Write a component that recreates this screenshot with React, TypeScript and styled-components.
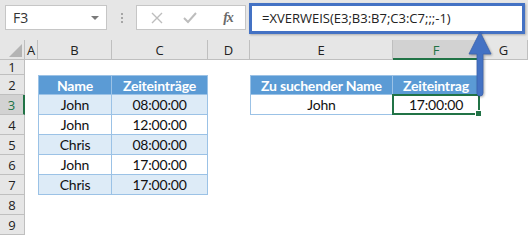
import React from "react";
import styled, { createGlobalStyle } from "styled-components";

const GlobalStyle = createGlobalStyle`
  html, body {
    margin: 0;
    padding: 0;
    background: #ffffff;
  }
  body {
    width: 528px;
    height: 240px;
    overflow: hidden;
    font-family: "Open Sans", "Liberation Sans", sans-serif;
  }
`;

const GREEN = "#217346";
const BLUE = "#4472c4";

const Page = styled.div`
  position: relative;
  width: 528px;
  height: 240px;
  overflow: hidden;
  background: #ffffff;
`;

const FormulaBar = styled.div`
  display: flex;
  align-items: flex-start;
  height: 40px;
  background: #e6e6e6;
  box-sizing: border-box;
  padding: 5px 0 0 5px;
`;

const NameBox = styled.div`
  position: relative;
  width: 102px;
  height: 25px;
  box-sizing: border-box;
  background: #fff;
  border: 1px solid #c6c6c6;
  font-size: 14px;
  line-height: 23px;
  padding-left: 7px;
  color: #333;
`;

const DropArrow = styled.span`
  position: absolute;
  right: 7px;
  top: 10px;
  width: 0;
  height: 0;
  border-left: 4px solid transparent;
  border-right: 4px solid transparent;
  border-top: 4px solid #7a7a7a;
`;

const Dots = styled.div`
  display: flex;
  flex-direction: column;
  gap: 2px;
  margin: 8px 13px 0 14px;
  > span {
    width: 2px;
    height: 2px;
    background: #a6a6a6;
  }
`;

const ButtonBox = styled.div`
  display: flex;
  align-items: center;
  width: 110px;
  height: 25px;
  box-sizing: border-box;
  background: #fff;
  border: 1px solid #c6c6c6;
  padding-left: 13px;
`;

const IconSlot = styled.span<{ $w: number }>`
  display: flex;
  align-items: center;
  justify-content: center;
  width: ${(p) => p.$w}px;
`;

const Fx = styled.span`
  font-family: "Liberation Serif", "DejaVu Serif", serif;
  font-style: italic;
  font-weight: bold;
  font-size: 14px;
  color: #6a6a6a;
  letter-spacing: -1px;
`;

const FormulaInput = styled.div`
  margin-left: 3px;
  margin-top: -2px;
  width: 276px;
  height: 31px;
  box-sizing: border-box;
  background: #fff;
  border: 3px solid ${BLUE};
  box-shadow: 1px 1px 2px rgba(0, 0, 0, 0.25);
  font-size: 13px;
  line-height: 25px;
  padding-left: 10px;
  color: #222;
  white-space: nowrap;
`;

const Sheet = styled.div`
  display: grid;
  grid-template-columns: 25px 13px 74px 96px 42px 143px 87px 1fr;
  grid-template-rows: 20px 15px repeat(8, 20px);
`;

const ColHead = styled.div<{ $active?: boolean }>`
  position: relative;
  box-sizing: border-box;
  background: ${(p) => (p.$active ? "#d2d2d2" : "#e6e6e6")};
  border-right: 1px solid #bfbfbf;
  border-bottom: ${(p) => (p.$active ? `2px solid ${GREEN}` : "1px solid #bfbfbf")};
  color: ${(p) => (p.$active ? GREEN : "#222")};
  font-size: 13px;
  line-height: 20px;
  text-align: center;
`;

const Corner = styled(ColHead)`
  &::after {
    content: "";
    position: absolute;
    right: 2px;
    bottom: 2px;
    width: 0;
    height: 0;
    border-left: 13px solid transparent;
    border-bottom: 13px solid #b4b4b4;
  }
`;

const RowHead = styled.div<{ $active?: boolean }>`
  grid-column: 1;
  box-sizing: border-box;
  display: flex;
  align-items: center;
  justify-content: center;
  background: ${(p) => (p.$active ? "#d2d2d2" : "#e6e6e6")};
  border-right: ${(p) => (p.$active ? `2px solid ${GREEN}` : "1px solid #bfbfbf")};
  border-bottom: 1px solid #bfbfbf;
  color: ${(p) => (p.$active ? GREEN : "#222")};
  font-size: 13px;
  line-height: 14px;
`;

type Tone = "head" | "band" | "plain";

const Cell = styled.div<{ $tone: Tone; $first?: boolean; $top?: boolean }>`
  box-sizing: border-box;
  display: flex;
  align-items: center;
  justify-content: center;
  font-family: Lato, "Open Sans", sans-serif;
  font-size: 14px;
  letter-spacing: -0.2px;
  font-weight: ${(p) => (p.$tone === "head" ? 700 : 400)};
  color: ${(p) => (p.$tone === "head" ? "#fff" : "#111")};
  background: ${(p) =>
    p.$tone === "head" ? "#5b9bd5" : p.$tone === "band" ? "#ddebf7" : "#fff"};
  border-right: 1px solid #9bc2e6;
  border-bottom: 1px solid #9bc2e6;
  border-left: ${(p) => (p.$first ? "1px solid #9bc2e6" : "none")};
  border-top: ${(p) => (p.$top ? "1px solid #9bc2e6" : "none")};
`;

const ActiveCell = styled(Cell)`
  position: relative;
  border: 2px solid ${GREEN};
  margin: -1px 0 0 -1px;
  &::after {
    content: "";
    position: absolute;
    right: -4px;
    bottom: -4px;
    width: 5px;
    height: 5px;
    background: ${GREEN};
    border: 1px solid #fff;
  }
`;

const Arrow = styled.svg`
  position: absolute;
  left: 466px;
  top: 31px;
  filter: drop-shadow(1px 1px 1px rgba(0, 0, 0, 0.3));
`;

const columns = ["A", "B", "C", "D", "E", "F", "G"];

const data = [
  ["John", "08:00:00"],
  ["John", "12:00:00"],
  ["Chris", "08:00:00"],
  ["John", "17:00:00"],
  ["Chris", "17:00:00"],
];

export default function App() {
  return (
    <Page>
      <GlobalStyle />
      <FormulaBar>
        <NameBox>
          F3
          <DropArrow />
        </NameBox>
        <Dots>
          <span />
          <span />
          <span />
        </Dots>
        <ButtonBox>
          <IconSlot $w={14}>
            <svg width="12" height="12" viewBox="0 0 12 12">
              <path d="M1 1 L11 11 M11 1 L1 11" stroke="#bdbdbd" strokeWidth="1.4" />
            </svg>
          </IconSlot>
          <IconSlot $w={52}>
            <svg width="14" height="12" viewBox="0 0 14 12">
              <path d="M1 6 L5 10 L13 1" stroke="#bdbdbd" strokeWidth="2" fill="none" />
            </svg>
          </IconSlot>
          <IconSlot $w={24}>
            <Fx>fx</Fx>
          </IconSlot>
        </ButtonBox>
        <FormulaInput>=XVERWEIS(E3;B3:B7;C3:C7;;;-1)</FormulaInput>
      </FormulaBar>

      <Sheet>
        <Corner />
        {columns.map((c) => (
          <ColHead key={c} $active={c === "F"}>
            {c}
          </ColHead>
        ))}

        {Array.from({ length: 9 }, (_, i) => (
          <RowHead key={i} $active={i === 2} style={{ gridRow: i + 2 }}>
            {i + 1}
          </RowHead>
        ))}

        <Cell $tone="head" $first $top style={{ gridRow: 3, gridColumn: 3 }}>
          Name
        </Cell>
        <Cell $tone="head" $top style={{ gridRow: 3, gridColumn: 4 }}>
          Zeiteinträge
        </Cell>
        {data.map(([name, time], i) => (
          <React.Fragment key={i}>
            <Cell
              $tone={i % 2 === 0 ? "band" : "plain"}
              $first
              style={{ gridRow: i + 4, gridColumn: 3 }}
            >
              {name}
            </Cell>
            <Cell $tone={i % 2 === 0 ? "band" : "plain"} style={{ gridRow: i + 4, gridColumn: 4 }}>
              {time}
            </Cell>
          </React.Fragment>
        ))}

        <Cell $tone="head" $first $top style={{ gridRow: 3, gridColumn: 6 }}>
          Zu suchender Name
        </Cell>
        <Cell $tone="head" $top style={{ gridRow: 3, gridColumn: 7 }}>
          Zeiteintrag
        </Cell>
        <Cell $tone="plain" $first style={{ gridRow: 4, gridColumn: 6 }}>
          John
        </Cell>
        <ActiveCell $tone="plain" style={{ gridRow: 4, gridColumn: 7 }}>
          17:00:00
        </ActiveCell>
      </Sheet>

      <Arrow width="28" height="66" viewBox="0 0 28 66">
        <path
          d="M14 1 L25 23 L17 23 L17 62 Q17 65 14 65 Q11 65 11 62 L11 23 L3 23 Z"
          fill={BLUE}
          stroke="#3a62ad"
          strokeWidth="0.8"
        />
      </Arrow>
    </Page>
  );
}
